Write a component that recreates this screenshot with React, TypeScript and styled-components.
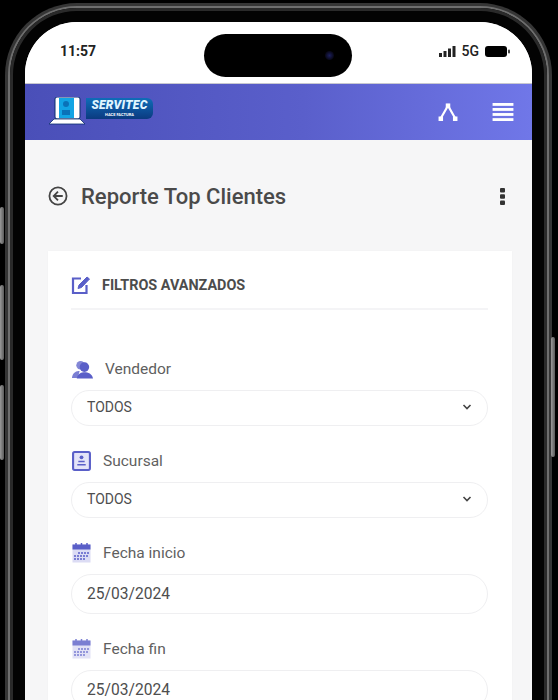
import styled, { createGlobalStyle } from "styled-components";

const GlobalStyle = createGlobalStyle`
  html, body {
    margin: 0;
    padding: 0;
    background: #000;
    font-family: Roboto, "Liberation Sans", sans-serif;
  }
`;

const Page = styled.div`
  position: relative;
  width: 558px;
  height: 700px;
  overflow: hidden;
  background: #000;
`;

const Phone = styled.div`
  margin: 3px 0 0 5px;
  width: 547px;
  height: 820px;
  box-sizing: border-box;
  padding: 3px;
  border-radius: 72px;
  background: #363636;
`;

const Band = styled.div`
  height: 100%;
  box-sizing: border-box;
  padding: 2px;
  border-radius: 69px;
  background: #6e6e6e;
`;

const Bezel = styled.div`
  height: 100%;
  box-sizing: border-box;
  padding: 14px 15px 0 15px;
  border-radius: 67px;
  background: #030303;
  box-shadow: inset 0 0 0 3px #2a2a2a;
`;

const Screen = styled.div`
  position: relative;
  height: 100%;
  border-radius: 52px 52px 0 0;
  overflow: hidden;
  background: #f6f6f7;
  display: flex;
  flex-direction: column;
`;

const SideButton = styled.div<{ $top: number; $height: number; $right?: boolean }>`
  position: absolute;
  top: ${(p) => p.$top}px;
  height: ${(p) => p.$height}px;
  ${(p) => (p.$right ? "right: 3px;" : "left: 0;")}
  width: 4px;
  border-radius: 2px;
  background: linear-gradient(90deg, #9a9a9a, #5a5a5a);
`;

const Island = styled.div`
  position: absolute;
  left: 179px;
  top: 12px;
  width: 148px;
  height: 43px;
  border-radius: 22px;
  background: #000;
`;

const Camera = styled.div`
  position: absolute;
  right: 18px;
  top: 17px;
  width: 9px;
  height: 9px;
  border-radius: 50%;
  background: radial-gradient(circle, #1c1f5e 0, #0a0a1e 60%, #000 100%);
`;

const StatusBar = styled.div`
  height: 62px;
  flex-shrink: 0;
  box-sizing: border-box;
  padding: 0 22px 3px 35px;
  background: #fff;
  display: flex;
  justify-content: space-between;
  align-items: center;
  border-bottom: 1px solid #c8c8d0;
`;

const Clock = styled.span`
  font-size: 14px;
  font-weight: 700;
  color: #222;
`;

const StatusRight = styled.div`
  display: flex;
  align-items: center;
  gap: 6px;
  font-size: 14px;
  font-weight: 500;
  color: #222;
`;

const Header = styled.div`
  height: 56px;
  flex-shrink: 0;
  box-sizing: border-box;
  padding: 0 18px 0 25px;
  background: linear-gradient(90deg, #4a4fb8 0, #5a5fcb 55%, #7077e8 100%);
  display: flex;
  align-items: center;
  justify-content: space-between;
`;

const Logo = styled.div`
  display: flex;
  align-items: center;
  margin-top: -3px;
`;

const LogoBadge = styled.div`
  margin-left: -1px;
  width: 67px;
  height: 21px;
  border-radius: 0 6px 6px 0;
  margin-top: -4px;
  background: linear-gradient(180deg, #0f6db8, #0b3a80);
  display: flex;
  flex-direction: column;
  align-items: center;
  color: #fff;
  line-height: 1;
`;

const LogoName = styled.span`
  font-size: 12px;
  height: 14px;
  line-height: 14px;
  font-weight: 900;
  font-style: italic;
  letter-spacing: 0.3px;
  color: #e0f5ff;
`;

const LogoSub = styled.span`
  font-size: 4px;
  height: 5px;
  line-height: 5px;
  font-weight: 700;
`;

const HeaderIcons = styled.div`
  display: flex;
  align-items: center;
  gap: 33px;
`;

const Content = styled.div`
  flex: 1;
  padding: 0 20px 0 23px;
`;

const TitleRow = styled.div`
  height: 111px;
  box-sizing: border-box;
  padding: 1px 7px 0 0;
  display: flex;
  align-items: center;
  gap: 13px;
`;

const Title = styled.h1`
  flex: 1;
  margin: 0;
  font-size: 22px;
  font-weight: 500;
  color: #4a4a4a;
`;

const Card = styled.div`
  background: #fff;
  padding: 0 24px;
  box-shadow: 0 0 2px rgba(0, 0, 0, 0.03);
`;

const CardHeader = styled.div`
  height: 59px;
  display: flex;
  align-items: center;
  gap: 11px;
  border-bottom: 2px solid #f4f4f6;
  margin-left: -1px;
  padding-top: 11px;
  box-sizing: border-box;
`;

const CardTitle = styled.span`
  font-size: 14.4px;
  font-weight: 700;
  color: #4c4c4c;
`;

const Filters = styled.div`
  padding-top: 47px;
  margin-left: -1px;
`;

const Field = styled.div`
  margin-bottom: 23px;
`;

const Label = styled.div`
  height: 24px;
  padding-left: 1px;
  display: flex;
  align-items: center;
  gap: 12px;
  margin-bottom: 9px;
  font-size: 15.5px;
  color: #5f5f5f;
`;

const Box = styled.div<{ $tall?: boolean }>`
  height: ${(p) => (p.$tall ? 40 : 36)}px;
  box-sizing: border-box;
  border: 1.5px solid #efeff1;
  border-radius: 20px;
  padding: 0 15px ${(p) => (p.$tall ? 0 : 2)}px;
  display: flex;
  align-items: center;
  justify-content: space-between;
  color: #4e4e4e;
  font-size: ${(p) => (p.$tall ? 15.6 : 14)}px;
`;

const ACCENT = "#5a5fc8";

function BackIcon() {
  return (
    <svg width="20" height="20" viewBox="0 0 21 21" fill="none" stroke="#454545" strokeWidth="1.9">
      <circle cx="10.5" cy="10.5" r="9" />
      <path d="M10.5 6 L6 10.5 L10.5 15 M6 10.5 H15.5" />
    </svg>
  );
}

function Chevron() {
  return (
    <svg width="10" height="8" viewBox="0 0 10 8" fill="none" stroke="#444" strokeWidth="1.6">
      <path d="M1.5 2 L5 5.5 L8.5 2" />
    </svg>
  );
}

function CalendarIcon({ faded }: { faded?: boolean }) {
  return (
    <svg width="19" height="20" viewBox="0 0 19 20" style={{ opacity: faded ? 0.8 : 1 }}>
      <rect x="0.5" y="1.5" width="18" height="18" fill="#dcdcf4" />
      <rect x="0.5" y="1.5" width="18" height="5" fill={ACCENT} />
      <path d="M4 0 V3 M9.5 0 V3 M15 0 V3" stroke={ACCENT} strokeWidth="1.5" />
      <path d="M6 10 H17 M2 13 H17 M2 16 H13" stroke={ACCENT} strokeWidth="1.6" strokeDasharray="2 1" />
    </svg>
  );
}

export default function App() {
  return (
    <>
      <GlobalStyle />
      <Page>
        <SideButton $top={207} $height={37} />
        <SideButton $top={285} $height={75} />
        <SideButton $top={385} $height={75} />
        <SideButton $top={337} $height={120} $right />
        <Phone>
          <Band>
            <Bezel>
              <Screen>
                <Island>
                  <Camera />
                </Island>
                <StatusBar>
                  <Clock>11:57</Clock>
                  <StatusRight>
                    <svg width="17" height="11" viewBox="0 0 17 11" fill="#222">
                      <rect x="0" y="7" width="3" height="4" />
                      <rect x="4.5" y="5" width="3" height="6" />
                      <rect x="9" y="2.5" width="3" height="8.5" />
                      <rect x="13.5" y="0" width="3" height="11" />
                    </svg>
                    <span>5G</span>
                    <svg width="25" height="11" viewBox="0 0 25 11" fill="#000">
                      <rect x="0" y="0" width="22" height="11" rx="3" />
                      <rect x="23" y="3.5" width="2" height="4" rx="1" fill="#444" />
                    </svg>
                  </StatusRight>
                </StatusBar>
                <Header>
                  <Logo>
                    <svg width="40" height="28" viewBox="0 0 36 28" style={{ marginLeft: -3 }}>
                      <rect x="6" y="0" width="25" height="22" rx="2" fill="#fff" stroke="#0a2e6e" />
                      <rect x="10" y="1" width="15" height="20" fill="#12a4e4" />
                      <circle cx="17" cy="7" r="3" fill="#0a72b8" />
                      <rect x="13" y="13" width="8" height="5" fill="#0a72b8" />
                      <path d="M5 22 H31 L36 27 H0 Z" fill="#fff" stroke="#0a2e6e" strokeWidth="0.8" />
                    </svg>
                    <LogoBadge>
                      <LogoName>SERVITEC</LogoName>
                      <LogoSub>HACE FACTURA</LogoSub>
                    </LogoBadge>
                  </Logo>
                  <HeaderIcons>
                    <svg width="22" height="18" viewBox="0 0 22 20" fill="none" stroke="#fff" strokeWidth="2.4">
                      <path d="M3 17 L11 3 L19 17" />
                      <rect x="8.5" y="0.5" width="5" height="5" fill="#fff" stroke="none" />
                      <rect x="0.5" y="15" width="5" height="5" fill="#fff" stroke="none" />
                      <rect x="16.5" y="15" width="5" height="5" fill="#fff" stroke="none" />
                    </svg>
                    <svg width="22" height="18" viewBox="0 0 22 19" fill="#fff">
                      <rect width="22" height="3" />
                      <rect y="5.3" width="22" height="3" />
                      <rect y="10.6" width="22" height="3" />
                      <rect y="16" width="22" height="3" />
                    </svg>
                  </HeaderIcons>
                </Header>
                <Content>
                  <TitleRow>
                    <BackIcon />
                    <Title>Reporte Top Clientes</Title>
                    <svg width="5" height="17" viewBox="0 0 5 17" fill="#333">
                      <rect width="5" height="4.5" rx="1" />
                      <rect y="6.2" width="5" height="4.5" rx="1" />
                      <rect y="12.5" width="5" height="4.5" rx="1" />
                    </svg>
                  </TitleRow>
                  <Card>
                    <CardHeader>
                      <svg width="20" height="20" viewBox="0 0 20 20" fill="none" stroke={ACCENT} strokeWidth="2.2">
                        <path d="M10 3.5 H2 V18 H15.5 V10" />
                        <path d="M7 13.5 L8 10 L16 2 L18.5 4 L10.5 12.5 Z" fill={ACCENT} strokeWidth="1" />
                      </svg>
                      <CardTitle>FILTROS AVANZADOS</CardTitle>
                    </CardHeader>
                    <Filters>
                      <Field>
                        <Label>
                          <svg width="21" height="19" viewBox="0 0 22 19" fill={ACCENT}>
                            <circle cx="9" cy="5" r="4.5" opacity="0.75" />
                            <circle cx="13" cy="7" r="5" />
                            <path d="M0 17.5 C1 12 5 11 8 11 L6 18.5 H0 Z" opacity="0.8" />
                            <path d="M5 19 C6 13.5 10 12.5 13 12.5 C17 12.5 21 14 22 19 Z" />
                          </svg>
                          <span>Vendedor</span>
                        </Label>
                        <Box>
                          <span>TODOS</span>
                          <Chevron />
                        </Box>
                      </Field>
                      <Field>
                        <Label>
                          <svg width="19" height="20" viewBox="0 0 18 19" fill="none" stroke={ACCENT}>
                            <rect x="1" y="1" width="16" height="17" rx="1.5" fill="#e4e4f8" strokeWidth="2" />
                            <circle cx="9" cy="6" r="1.8" fill={ACCENT} stroke="none" />
                            <path d="M6 10 H12 M5 13 H13" strokeWidth="1.4" />
                          </svg>
                          <span>Sucursal</span>
                        </Label>
                        <Box>
                          <span>TODOS</span>
                          <Chevron />
                        </Box>
                      </Field>
                      <Field>
                        <Label>
                          <CalendarIcon />
                          <span>Fecha inicio</span>
                        </Label>
                        <Box $tall>
                          <span>25/03/2024</span>
                        </Box>
                      </Field>
                      <Field>
                        <Label>
                          <CalendarIcon faded />
                          <span>Fecha fin</span>
                        </Label>
                        <Box $tall>
                          <span>25/03/2024</span>
                        </Box>
                      </Field>
                    </Filters>
                  </Card>
                </Content>
              </Screen>
            </Bezel>
          </Band>
        </Phone>
      </Page>
    </>
  );
}
